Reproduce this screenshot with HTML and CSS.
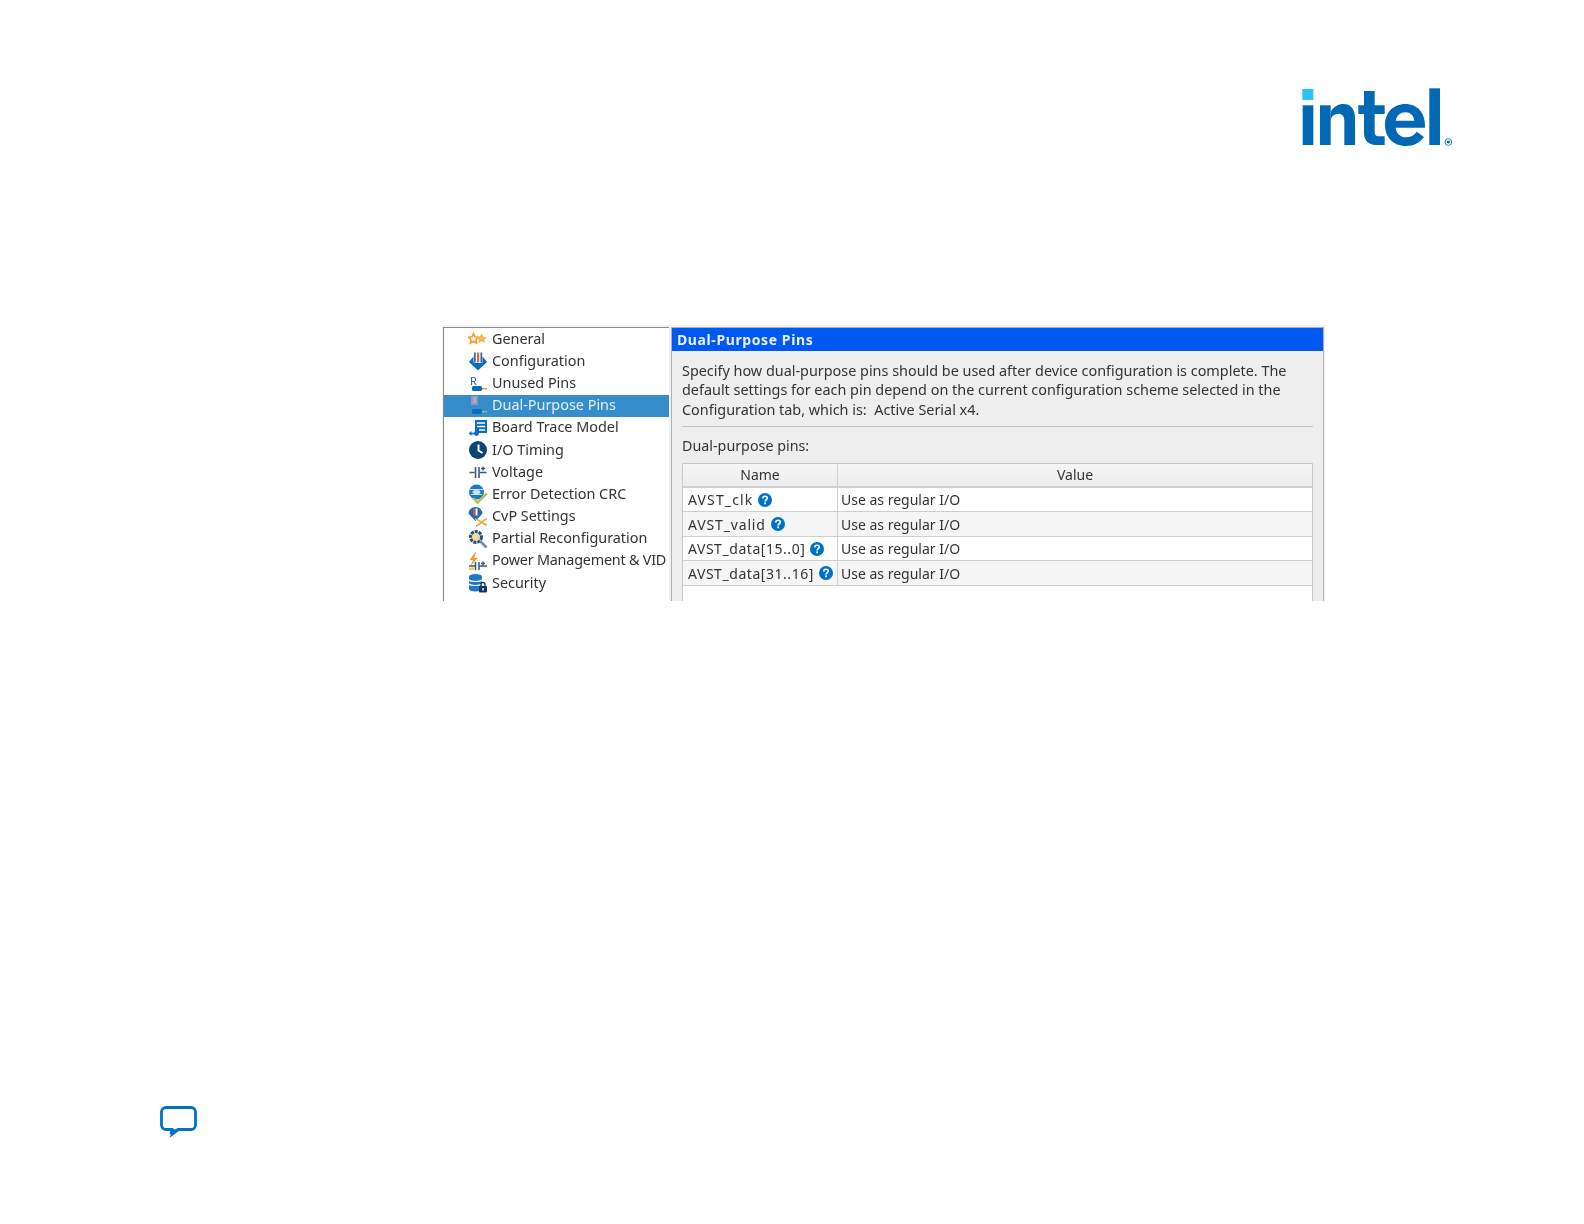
FILE: index.html
```html
<!DOCTYPE html>
<html lang="en">
<head>
<meta charset="utf-8">
<title>Dual-Purpose Pins</title>
<link rel="stylesheet" href="styles.css">
</head>
<body>
<div class="page">
  <header class="top">
    <svg class="logo" viewBox="0 0 510 225" aria-label="intel">
      <rect x="37" y="27" width="33" height="33" fill="#2bc4f3"/>
      <g fill="#0068b5">
        <rect x="38" y="76" width="32" height="119"/>
        <rect x="90" y="76" width="32" height="119"/>
        <path d="M122 96C130 80 146 72 160 72C184 72 195 90 195 114V195H163V122C163 108 156 101 146 101C132 101 122 110 122 124Z"/>
        <path d="M222 33H254V76H284V102H254V158C254 166 260 169 268 169H284V195H262C236 195 222 182 222 158V102H205V76H222Z"/>
        <path d="M346 72C382 72 405 98 405 136V143H317C319 160 331 172 348 172C362 172 372 166 380 155L402 171C390 188 372 198 347 198C310 198 285 172 285 135C285 98 310 72 346 72ZM317 122H373C371 107 361 97 346 97C331 97 320 107 317 122Z" fill-rule="evenodd"/>
        <rect x="418" y="25" width="32" height="170"/>
      </g>
      <circle cx="475" cy="186" r="10" fill="none" stroke="#0068b5" stroke-width="2.500"/>
      <circle cx="475" cy="186" r="4.500" fill="#0068b5"/>
    </svg>
  </header>

  <section class="shot">
    <nav class="tree">
      <div class="item">
        <svg class="ico" viewBox="0 0 20 20"><path d="M5.500 4.500l1.500 3.300 3.500.4-2.600 2.400.7 3.500-3.100-1.800-3.100 1.800.7-3.500L.5 8.200 4 7.800z" fill="none" stroke="#f2a033" stroke-width="1.600"/><path d="M13.500 4.500l1.600 3.300 3.700.4-2.700 2.400.7 3.500-3.300-1.800-3.300 1.800.7-3.500-2.700-2.400 3.700-.4z" fill="#f7b24a"/></svg>
        <span>General</span>
      </div>
      <div class="item">
        <svg class="ico" viewBox="0 0 20 20"><path d="M5 6H15L19 11 10 19.500 1 11z" fill="#0a6cc0"/><rect x="5.500" y="1" width="9" height="11" rx="1" fill="#fff"/><rect x="6" y="1.500" width="1.700" height="10" fill="#2a66b0"/><rect x="9" y="1.500" width="2.200" height="10" fill="#e0683a"/><rect x="12.500" y="1.500" width="1.700" height="10" fill="#2a66b0"/></svg>
        <span>Configuration</span>
      </div>
      <div class="item">
        <svg class="ico" viewBox="0 0 20 20"><text class="ico-r" x="2" y="12">R</text><rect x="4" y="13" width="10" height="5" rx="1.500" fill="#0a6cc0"/><rect x="14" y="15" width="5" height="1.500" fill="#c9a23c"/></svg>
        <span>Unused Pins</span>
      </div>
      <div class="item is-selected">
        <svg class="ico" viewBox="0 0 20 20"><rect x="3" y="0" width="7" height="9" fill="#7f9dc8"/><rect x="5" y="1" width="3" height="6" fill="#c8a0b0"/><rect x="4" y="13" width="10" height="5" rx="1.500" fill="#0a6cc0"/><rect x="14" y="15" width="5" height="1.500" fill="#9db27a"/></svg>
        <span>Dual-Purpose Pins</span>
      </div>
      <div class="item">
        <svg class="ico" viewBox="0 0 20 20"><path d="M7 2h12v13H7z" fill="#0a6cc0"/><path d="M9 5h8M9 8.500h8M11 12h6" stroke="#fff" stroke-width="1.300"/><path d="M1 15.500h7" stroke="#0a6cc0" stroke-width="1.600" fill="none"/><circle cx="8.500" cy="15.500" r="2.400" fill="#0a6cc0"/><path d="M3 13.500v4" stroke="#0a6cc0" stroke-width="1.200"/></svg>
        <span>Board Trace Model</span>
      </div>
      <div class="item">
        <svg class="ico" viewBox="0 0 20 20"><circle cx="10" cy="10" r="9" fill="#0c4478"/><path d="M10.500 4.500V10.500l4 2.500" fill="none" stroke="#fff" stroke-width="2"/></svg>
        <span>I/O Timing</span>
      </div>
      <div class="item">
        <svg class="ico" viewBox="0 0 20 20"><path d="M1.500 10.500h5M11.500 10.500H18.500M15 4.500v4M13 6.500h4" stroke="#35597f" stroke-width="1.300" fill="none"/><path d="M7.500 5v11M11 5v11" stroke="#35597f" stroke-width="1.600"/></svg>
        <span>Voltage</span>
      </div>
      <div class="item">
        <svg class="ico" viewBox="0 0 20 20"><circle cx="8.500" cy="8" r="7.500" fill="#1f78c8"/><path d="M2 5.500h13M3 10.500h11" stroke="#cfe4f7" stroke-width="1"/><ellipse cx="8.500" cy="8" rx="4" ry="2" fill="#cfe4f7"/><path d="M5 14l4.500 4.500 9.500-9" fill="none" stroke="#b4c33e" stroke-width="2.400"/></svg>
        <span>Error Detection CRC</span>
      </div>
      <div class="item">
        <svg class="ico" viewBox="0 0 20 20"><path d="M7.500 0a7 7 0 0 1 7 6.500L7.500 14 .5 6.500a7 7 0 0 1 7-6.500z" fill="#2a66b0"/><rect x="5" y="1.500" width="1.700" height="7" fill="#e0503c"/><rect x="7.500" y="1.500" width="2" height="7" fill="#fff"/><path d="M7 12c5 0 6 5 12 6M8 19c4-1 6-6 11-7" fill="none" stroke="#e9a93c" stroke-width="1.700"/></svg>
        <span>CvP Settings</span>
      </div>
      <div class="item">
        <svg class="ico" viewBox="0 0 20 20"><circle cx="8" cy="8" r="5.500" fill="#f4d9a6" stroke="#24527f" stroke-width="3" stroke-dasharray="3 1"/><path d="M12 12l6.500 6.500" stroke="#6f8fae" stroke-width="2.600"/></svg>
        <span>Partial Reconfiguration</span>
      </div>
      <div class="item item-tight">
        <svg class="ico" viewBox="0 0 20 20"><path d="M8 0L1.500 9H5L2.500 15 10 7H6.500z" fill="#f0a029"/><path d="M1 15h6M11 15H19M15 10.500v4M13 12.500h4" stroke="#35597f" stroke-width="1.300" fill="none"/><path d="M7.500 11v8M11 11v8" stroke="#35597f" stroke-width="1.500"/><rect x="1" y="16.500" width="5" height="2.500" fill="#f5c469"/></svg>
        <span>Power Management &amp; VID</span>
      </div>
      <div class="item">
        <svg class="ico" viewBox="0 0 20 20"><path d="M1 3.500a6.500 2.500 0 0 1 13 0V16a6.500 2.500 0 0 1-13 0z" fill="#1d78c8"/><path d="M1 7c2 2 11 2 13 0M1 11c2 2 11 2 13 0" stroke="#fff" stroke-width="1.200" fill="none"/><rect x="11" y="13" width="8" height="6.500" rx="1" fill="#12365e"/><path d="M13 13v-1.500a2 2 0 0 1 4 0V13" fill="none" stroke="#12365e" stroke-width="1.300"/><rect x="14.300" y="15" width="1.400" height="2.500" fill="#fff"/></svg>
        <span>Security</span>
      </div>
    </nav>

    <main class="panel">
      <h1 class="panel-title">Dual-Purpose Pins</h1>
      <div class="panel-body">
        <p class="intro">Specify how dual-purpose pins should be used after device configuration is complete. The<br>default settings for each pin depend on the current configuration scheme selected in the<br>Configuration tab, which is:&nbsp; Active Serial x4.</p>
        <hr class="rule">
        <p class="label">Dual-purpose pins:</p>
        <div class="table">
          <div class="row head"><div class="c-name">Name</div><div class="c-value">Value</div></div>
          <div class="row"><div class="c-name"><span class="pin pin-clk">AVST_clk</span><svg class="help" viewBox="0 0 14 14"><circle cx="7" cy="7" r="7" fill="#0071c5"/><path d="M4.800 5.400C4.800 4 5.800 3.200 7 3.200S9.300 4 9.300 5.200C9.300 6.700 7.100 6.800 7.100 8.400" fill="none" stroke="#fff" stroke-width="1.600"/><rect x="6.200" y="9.400" width="1.800" height="1.800" fill="#fff"/></svg></div><div class="c-value">Use as regular I/O</div></div>
          <div class="row alt"><div class="c-name"><span class="pin pin-valid">AVST_valid</span><svg class="help" viewBox="0 0 14 14"><circle cx="7" cy="7" r="7" fill="#0071c5"/><path d="M4.800 5.400C4.800 4 5.800 3.200 7 3.200S9.300 4 9.300 5.200C9.300 6.700 7.100 6.800 7.100 8.400" fill="none" stroke="#fff" stroke-width="1.600"/><rect x="6.200" y="9.400" width="1.800" height="1.800" fill="#fff"/></svg></div><div class="c-value">Use as regular I/O</div></div>
          <div class="row"><div class="c-name"><span class="pin">AVST_data[15..0]</span><svg class="help" viewBox="0 0 14 14"><circle cx="7" cy="7" r="7" fill="#0071c5"/><path d="M4.800 5.400C4.800 4 5.800 3.200 7 3.200S9.300 4 9.300 5.200C9.300 6.700 7.100 6.800 7.100 8.400" fill="none" stroke="#fff" stroke-width="1.600"/><rect x="6.200" y="9.400" width="1.800" height="1.800" fill="#fff"/></svg></div><div class="c-value">Use as regular I/O</div></div>
          <div class="row alt"><div class="c-name"><span class="pin">AVST_data[31..16]</span><svg class="help" viewBox="0 0 14 14"><circle cx="7" cy="7" r="7" fill="#0071c5"/><path d="M4.800 5.400C4.800 4 5.800 3.200 7 3.200S9.300 4 9.300 5.200C9.300 6.700 7.100 6.800 7.100 8.400" fill="none" stroke="#fff" stroke-width="1.600"/><rect x="6.200" y="9.400" width="1.800" height="1.800" fill="#fff"/></svg></div><div class="c-value">Use as regular I/O</div></div>
        </div>
      </div>
    </main>
  </section>

  <footer class="bottom">
    <svg class="chat" viewBox="0 -1 37 33" aria-hidden="true"><path d="M6 1.500H31A4.500 4.500 0 0 1 35.500 6V19A4.500 4.500 0 0 1 31 23.500H18L11 27L12.500 23.500H6A4.500 4.500 0 0 1 1.500 19V6A4.500 4.500 0 0 1 6 1.500Z" fill="#fff" stroke="#0071c5" stroke-width="2.800" stroke-linejoin="round"/><path d="M13 23L9.500 32L19.500 24.500Z" fill="#0071c5"/></svg>
  </footer>
</div>
</body>
</html>
```

FILE: styles.css
```css
* { box-sizing: border-box; }
html, body { margin: 0; background: #fff; }
.page {
  width: 1584px;
  height: 1224px;
  display: flex;
  flex-direction: column;
  font-family: "Noto Sans", "Open Sans", sans-serif;
  color: #333;
}
.top {
  display: flex;
  justify-content: flex-end;
  padding: 80px 124px 0 0;
}
.logo { width: 170px; height: 75px; display: block; }

.shot {
  margin: 170px 0 0 442px;
  width: 883px;
  height: 276px;
  display: flex;
  align-items: stretch;
  overflow: hidden;
  background: #f2f2f2;
  padding: 2px 1px 0 1px;
  font-size: 14px;
  filter: blur(.35px);
}
.tree {
  width: 225.500px;
  flex: none;
  background: #fff;
  border: solid #8a8a8a;
  border-width: 1.500px 0 0 1.500px;
}
.item {
  height: 22.200px;
  display: flex;
  align-items: center;
  gap: 4px;
  padding-left: 24px;
  white-space: nowrap;
  overflow: hidden;
  font-size: 14.400px;
  line-height: 20px;
}
.item span { position: relative; top: -.5px; }
.item-tight { letter-spacing: -.22px; }
.item.is-selected { background: #378dca; color: #e3eef7; }
.ico { width: 20px; height: 20px; flex: none; }
.ico-r { font-size: 11px; fill: #2a5f9e; }

.panel {
  margin-left: 2.500px;
  flex: 1;
  background: #eeeeee;
  border: solid #b0b0b0;
  border-width: 1px 1px 0 1px;
  min-width: 0;
}
.panel-title {
  margin: 0;
  height: 23px;
  background: #0057f2;
  color: #e8f0ff;
  font-size: 14px;
  font-weight: 700;
  line-height: 23px;
  padding-left: 5px;
  letter-spacing: .6px;
}
.panel-body { padding: 10px 10px 0 10px; }
.intro { margin: 0; line-height: 19.300px; white-space: nowrap; font-size: 14.400px; }
.rule { margin: 7px 0 0; border: 0; border-top: 1px solid #c4c4c4; }
.label { margin: 0; padding-top: 9px; line-height: 19px; font-size: 14.300px; }
.table {
  margin-top: 8px;
  background: #fff;
  border: 1px solid #c8c8c8;
  height: 160px;
}
.row { display: flex; height: 24.500px; border-bottom: 1px solid #cfcfcf; background: #fff; }
.row.alt { background: #f5f5f5; }
.row.head { height: 24px; background: linear-gradient(#f6f6f6, #ececec); border-bottom: 2px solid #d0d0d0; }
.c-name {
  width: 155px;
  flex: none;
  border-right: 1px solid #d0d0d0;
  padding-left: 5px;
  display: flex;
  align-items: center;
  gap: 5px;
  white-space: nowrap;
}
.pin { letter-spacing: .55px; }
.pin-clk { letter-spacing: 1.150px; }
.pin-valid { letter-spacing: .85px; }
.c-value { flex: 1; padding-left: 3px; display: flex; align-items: center; }
.head .c-name, .head .c-value { justify-content: center; padding-left: 0; }
.help { width: 14px; height: 14px; flex: none; }

.bottom { margin-top: auto; padding: 0 0 86px 160px; }
.chat { width: 37px; height: 33px; display: block; }
```
